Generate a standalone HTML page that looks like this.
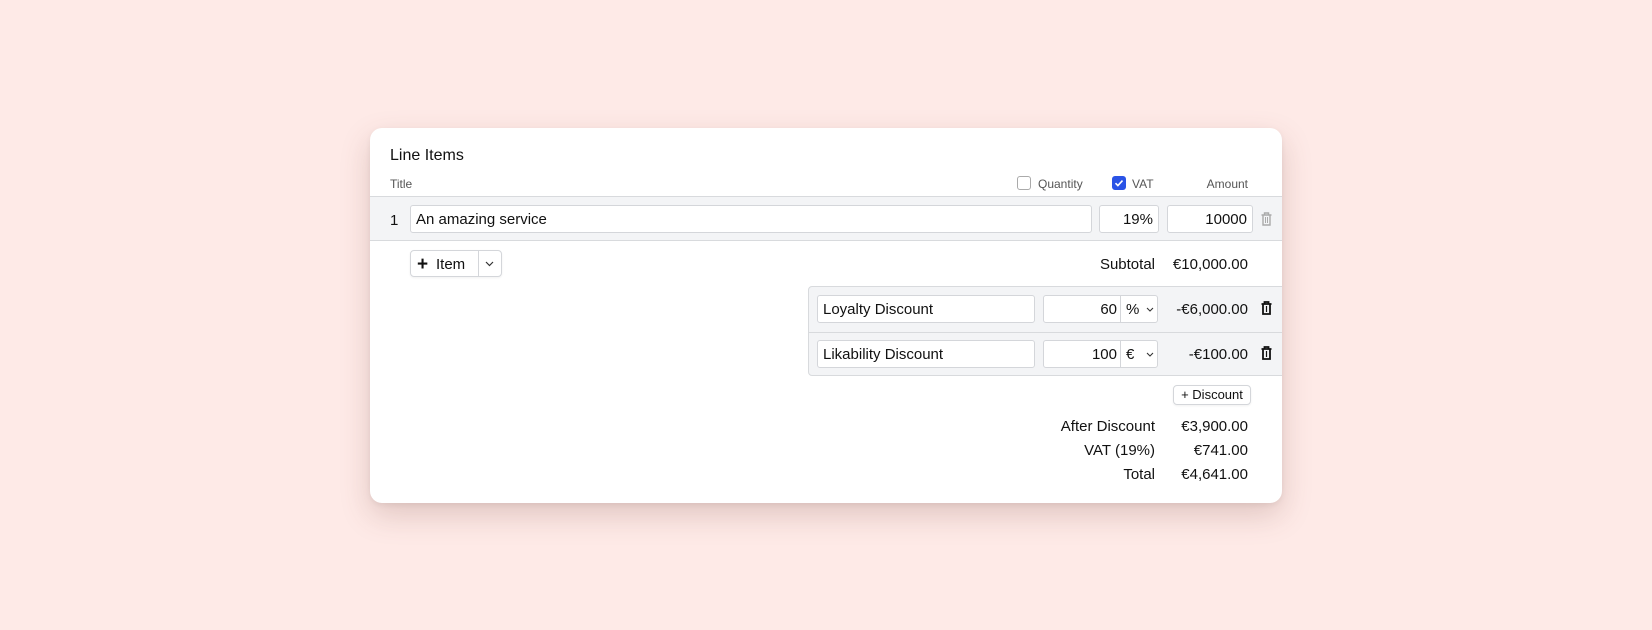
<!DOCTYPE html>
<html><head><style>
*{box-sizing:border-box;margin:0;padding:0}
body{width:1652px;height:630px;background:#feeae7;font-family:"Liberation Sans",sans-serif;color:#111;position:relative;overflow:hidden}
.card{position:absolute;left:370px;top:128px;width:912px;height:375px;background:#fff;border-radius:12px;box-shadow:0 12px 30px rgba(120,70,60,.22),0 2px 6px rgba(0,0,0,.06);overflow:hidden}
.a{position:absolute}
.inp{position:absolute;background:#fff;border:1px solid #d4d6da;border-radius:3px;font-size:15px;line-height:26px;padding:1px 5px 0}
.r{text-align:right}
.hd{font-size:12px;color:#555}
.t{font-size:15px;position:absolute;text-align:right}
.cb{position:absolute;width:14px;height:14px;border:1px solid #aaa;border-radius:3px;background:#fff}
</style></head><body>
<div class="card">
 <div class="a" style="left:20px;top:19px;font-size:16px">Line Items</div>
 <div class="a hd" style="left:20px;top:49px">Title</div>
 <div class="cb" style="left:647px;top:48px"></div>
 <div class="a hd" style="left:668px;top:49px">Quantity</div>
 <div class="cb" style="left:742px;top:48px;background:#2a53e6;border-color:#2a53e6"><svg width="12" height="12" viewBox="0 0 12 12" style="position:absolute;left:0;top:0"><path d="M2.5 6.2l2.4 2.4 4.6-5" stroke="#fff" stroke-width="1.6" fill="none"/></svg></div>
 <div class="a hd" style="left:762px;top:49px">VAT</div>
 <div class="a hd" style="right:34px;top:49px">Amount</div>
 <div class="a" style="left:0;top:68px;width:912px;height:45px;background:#f3f4f6;border-top:1px solid #d8dadd;border-bottom:1px solid #d8dadd"></div>
 <div class="a" style="left:20px;top:84px;font-size:15px">1</div>
 <div class="inp" style="left:40px;top:77px;width:682px;height:28px">An amazing service</div>
 <div class="inp r" style="left:729px;top:77px;width:60px;height:28px">19%</div>
 <div class="inp r" style="left:797px;top:77px;width:86px;height:28px">10000</div>
 <svg class="a" style="left:891px;top:84px" width="11" height="14" viewBox="0 0 11 14"><path d="M0.5 3h10M3.5 3V1h4v2M2 3v10h7V3" stroke="#aaa" stroke-width="1.4" fill="none"/><path d="M4.5 5v6M6.5 5v6" stroke="#aaa" stroke-width="1"/></svg>
 <div class="a" style="left:40px;top:122px;width:92px;height:27px;border:1px solid #d4d6da;border-radius:4px;box-shadow:0 1px 2px rgba(0,0,0,.06)"></div>
 <div class="a" style="left:108px;top:122px;width:1px;height:27px;background:#d4d6da"></div>
 <div class="a" style="left:47px;top:127px;font-size:19px;line-height:19px;font-weight:bold">+</div>
 <div class="a" style="left:66px;top:128px;font-size:15px">Item</div>
 <svg class="a" style="left:115px;top:133px" width="9" height="6"><path d="M1 1l3.5 3.5L8 1" stroke="#333" stroke-width="1.2" fill="none"/></svg>
 <div class="t" style="right:127px;top:128px">Subtotal</div>
 <div class="t" style="right:34px;top:128px">€10,000.00</div>
 <div class="a" style="left:438px;top:158px;width:480px;height:90px;background:#f3f4f6;border:1px solid #d8dadd;border-radius:4px 0 0 4px"></div>
 <div class="a" style="left:438px;top:204px;width:480px;height:1px;background:#d8dadd"></div>
 <div class="inp" style="left:447px;top:167px;width:218px;height:28px">Loyalty Discount</div>
 <div class="inp r" style="left:673px;top:167px;width:115px;height:28px;padding-right:40px">60</div>
 <div class="a" style="left:750px;top:168px;width:1px;height:26px;background:#d4d6da"></div>
 <div class="a" style="left:756px;top:173px;font-size:15px">%</div>
 <svg class="a" style="left:776px;top:179px" width="8" height="5"><path d="M1 1l3 3 3-3" stroke="#333" stroke-width="1.1" fill="none"/></svg>
 <div class="t" style="right:34px;top:173px">-€6,000.00</div>
 <svg class="a" style="left:891px;top:173px" width="11" height="14" viewBox="0 0 11 14"><path d="M0.5 3h10M3.5 3V1h4v2M2 3v10h7V3" stroke="#111" stroke-width="1.8" fill="none"/><path d="M5.5 5v6" stroke="#111" stroke-width="1.2"/></svg>
 <div class="inp" style="left:447px;top:212px;width:218px;height:28px">Likability Discount</div>
 <div class="inp r" style="left:673px;top:212px;width:115px;height:28px;padding-right:40px">100</div>
 <div class="a" style="left:750px;top:213px;width:1px;height:26px;background:#d4d6da"></div>
 <div class="a" style="left:756px;top:218px;font-size:15px">€</div>
 <svg class="a" style="left:776px;top:224px" width="8" height="5"><path d="M1 1l3 3 3-3" stroke="#333" stroke-width="1.1" fill="none"/></svg>
 <div class="t" style="right:34px;top:218px">-€100.00</div>
 <svg class="a" style="left:891px;top:218px" width="11" height="14" viewBox="0 0 11 14"><path d="M0.5 3h10M3.5 3V1h4v2M2 3v10h7V3" stroke="#111" stroke-width="1.8" fill="none"/><path d="M5.5 5v6" stroke="#111" stroke-width="1.2"/></svg>
 <div class="a" style="left:803px;top:257px;width:78px;height:20px;border:1px solid #d4d6da;border-radius:4px;font-size:13px;line-height:18px;text-align:center;box-shadow:0 1px 2px rgba(0,0,0,.06)">+ Discount</div>
 <div class="t" style="right:127px;top:290px">After Discount</div>
 <div class="t" style="right:34px;top:290px">€3,900.00</div>
 <div class="t" style="right:127px;top:314px">VAT (19%)</div>
 <div class="t" style="right:34px;top:314px">€741.00</div>
 <div class="t" style="right:127px;top:338px">Total</div>
 <div class="t" style="right:34px;top:338px">€4,641.00</div>
</div>
</body></html>
